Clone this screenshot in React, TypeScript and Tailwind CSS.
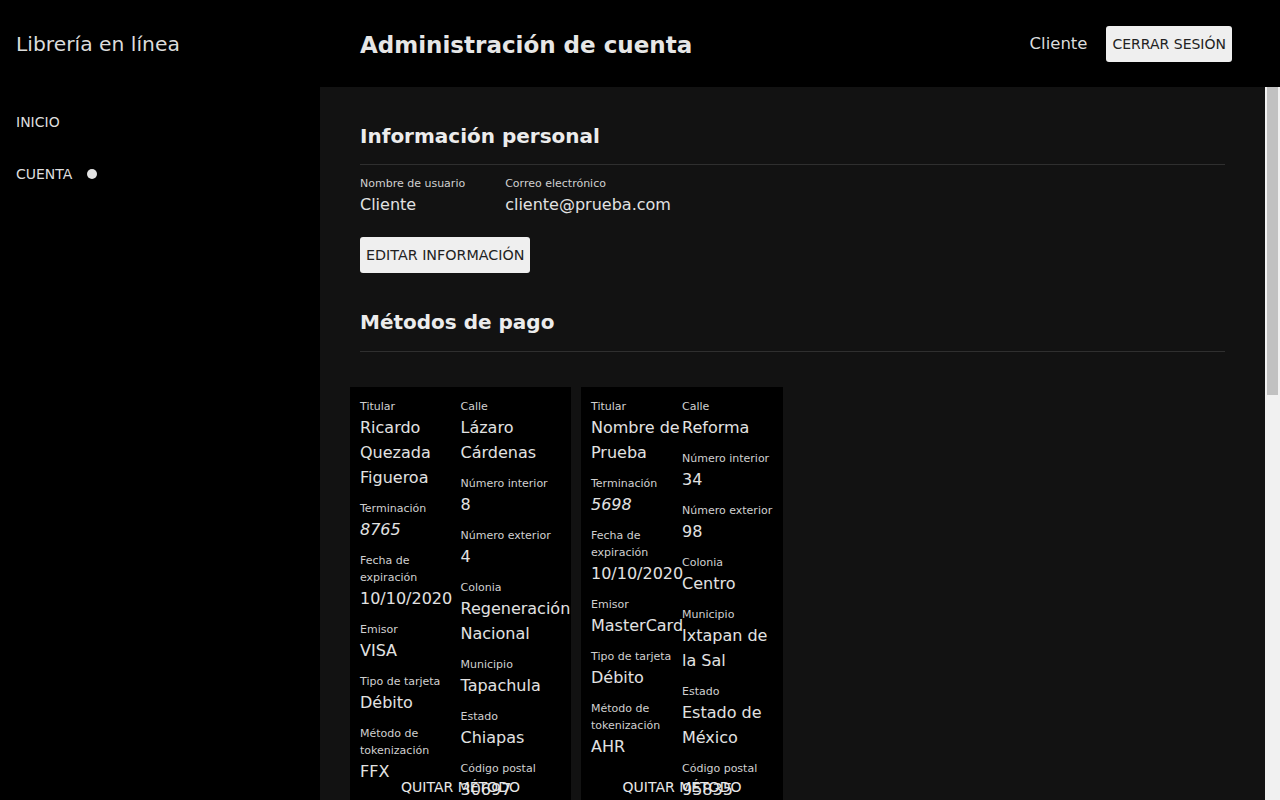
interface Field {
  label: string
  value: string
  italic?: boolean
}

interface PaymentCard {
  width: string
  left: Field[]
  right: Field[]
}

const cards: PaymentCard[] = [
  {
    width: 'w-[221px]',
    left: [
      { label: 'Titular', value: 'Ricardo Quezada Figueroa' },
      { label: 'Terminación', value: '8765', italic: true },
      { label: 'Fecha de expiración', value: '10/10/2020' },
      { label: 'Emisor', value: 'VISA' },
      { label: 'Tipo de tarjeta', value: 'Débito' },
      { label: 'Método de tokenización', value: 'FFX' },
    ],
    right: [
      { label: 'Calle', value: 'Lázaro Cárdenas' },
      { label: 'Número interior', value: '8' },
      { label: 'Número exterior', value: '4' },
      { label: 'Colonia', value: 'Regeneración Nacional' },
      { label: 'Municipio', value: 'Tapachula' },
      { label: 'Estado', value: 'Chiapas' },
      { label: 'Código postal', value: '30697' },
    ],
  },
  {
    width: 'w-[202px]',
    left: [
      { label: 'Titular', value: 'Nombre de Prueba' },
      { label: 'Terminación', value: '5698', italic: true },
      { label: 'Fecha de expiración', value: '10/10/2020' },
      { label: 'Emisor', value: 'MasterCard' },
      { label: 'Tipo de tarjeta', value: 'Débito' },
      { label: 'Método de tokenización', value: 'AHR' },
    ],
    right: [
      { label: 'Calle', value: 'Reforma' },
      { label: 'Número interior', value: '34' },
      { label: 'Número exterior', value: '98' },
      { label: 'Colonia', value: 'Centro' },
      { label: 'Municipio', value: 'Ixtapan de la Sal' },
      { label: 'Estado', value: 'Estado de México' },
      { label: 'Código postal', value: '95835' },
    ],
  },
]

function FieldView({ label, value, italic }: Field) {
  return (
    <div className="mb-[10px]">
      <div className="text-[11px] leading-[17px] text-[#d0d0d0]">{label}</div>
      <div className={`text-base leading-[25px] text-[#e2e2e2] ${italic ? 'italic' : ''}`}>{value}</div>
    </div>
  )
}

function SectionTitle({ title, gap }: { title: string; gap: string }) {
  return (
    <div>
      <h2 className="text-xl leading-7 font-bold text-[#ececec]">{title}</h2>
      <div className={`${gap} h-px bg-[#2f2f2f]`} />
    </div>
  )
}

export default function App() {
  return (
    <div className="flex h-screen flex-col bg-black font-['DejaVu_Sans',sans-serif] text-[#e2e2e2]">
      <header className="flex h-[87px] shrink-0 items-center bg-black">
        <div className="w-[320px] pl-4 pt-[2px] text-[20.3px] text-[#dcdcdc]">Librería en línea</div>
        <h1 className="flex-1 pl-10 pt-[3px] text-[23px] font-bold text-[#e6e6e6]">Administración de cuenta</h1>
        <div className="flex items-center gap-[19px] pr-12">
          <span className="pt-[2px] text-[16.5px] text-[#dcdcdc]">Cliente</span>
          <button className="rounded-[3px] bg-[#efefef] px-1.5 py-2 text-sm leading-5 text-[#222]">
            CERRAR SESIÓN
          </button>
        </div>
      </header>

      <div className="flex min-h-0 flex-1">
        <nav className="w-[320px] shrink-0 bg-black pl-4 pt-[25px]">
          <ul className="flex flex-col gap-8 text-sm leading-5 text-[#dedede]">
            <li>INICIO</li>
            <li className="flex items-center">
              CUENTA
              <span className="ml-[15px] h-2.5 w-2.5 rounded-full bg-[#e4e4e4]" />
            </li>
          </ul>
        </nav>

        <main className="flex min-w-0 flex-1 bg-[#121212]">
          <div className="min-w-0 flex-1 overflow-hidden px-10 pt-[35px]">
            <SectionTitle title="Información personal" gap="mt-[14px]" />
            <div className="mt-[10px] flex gap-10">
              <div>
                <div className="text-[11px] leading-[17px] text-[#d0d0d0]">Nombre de usuario</div>
                <div className="text-base leading-[25px]">Cliente</div>
              </div>
              <div>
                <div className="text-[11px] leading-[17px] text-[#d0d0d0]">Correo electrónico</div>
                <div className="text-base leading-[25px]">cliente@prueba.com</div>
              </div>
            </div>
            <button className="mt-5 rounded-[3px] bg-[#efefef] px-1.5 py-2 text-[14.3px] leading-5 text-[#222]">
              EDITAR INFORMACIÓN
            </button>

            <div className="mt-[35px]">
              <SectionTitle title="Métodos de pago" gap="mt-[15px]" />
            </div>

            <div className="-ml-[10px] mt-[35px] flex gap-[10px]">
              {cards.map((card, i) => (
                <div key={i} className={`relative h-[440px] ${card.width} bg-black px-[10px] pt-[11px]`}>
                  <div className="grid grid-cols-2">
                    <div>
                      {card.left.map((f) => (
                        <FieldView key={f.label} {...f} />
                      ))}
                    </div>
                    <div>
                      {card.right.map((f) => (
                        <FieldView key={f.label} {...f} />
                      ))}
                    </div>
                  </div>
                  <button className="absolute left-0 right-0 top-[390px] text-center text-sm leading-5 text-[#e8e8e8]">
                    QUITAR MÉTODO
                  </button>
                </div>
              ))}
            </div>
          </div>

          {/* scrollbar */}
          <div className="w-[15px] shrink-0 bg-[#f1f1f1] px-[2px]">
            <div className="h-[308px] bg-[#c1c1c1]" />
          </div>
        </main>
      </div>
    </div>
  )
}
